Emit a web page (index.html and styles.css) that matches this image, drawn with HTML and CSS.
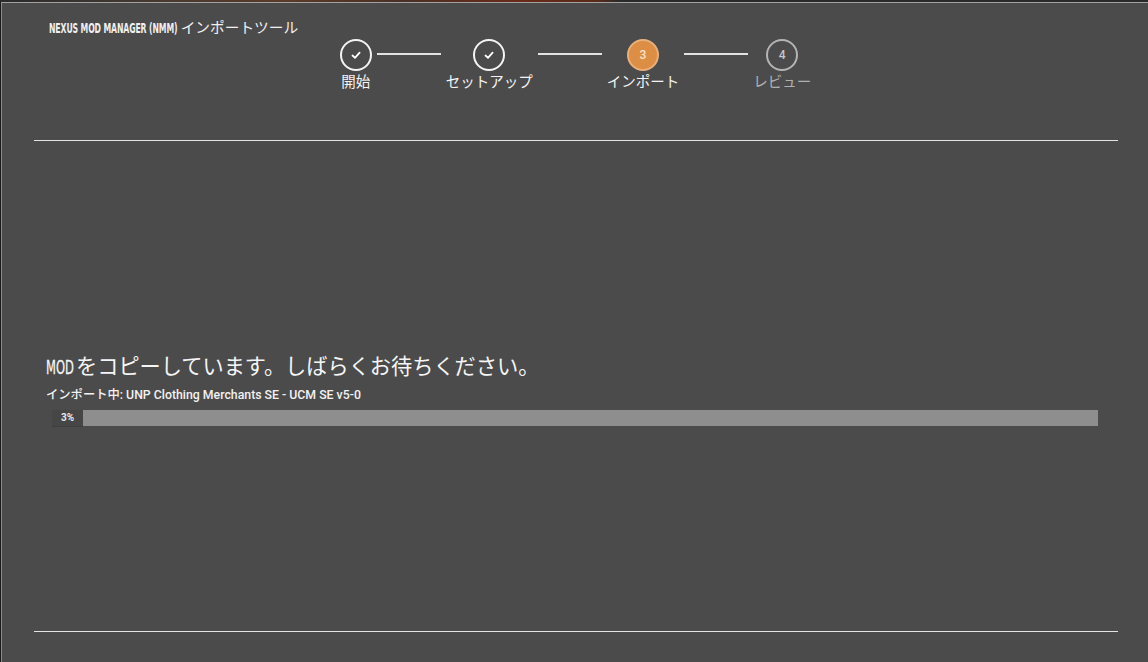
FILE: index.html
```html
<!DOCTYPE html>
<html lang="ja">
<head>
<meta charset="utf-8">
<title>NMM インポートツール</title>
<link rel="stylesheet" href="styles.css">
</head>
<body>
<div class="topstrip"></div>
<div class="panel">
  <header class="header">
    <div class="title"><span class="cond-box title-cond"><span class="cond">NEXUS MOD MANAGER (NMM)</span></span> インポートツール</div>
    <nav class="stepper">
      <div class="step done">
        <div class="circle"><svg viewBox="0 0 12 12" width="12" height="12"><path d="M2.5 6.5 L5 8.8 L9.6 3.6" fill="none" stroke="#fff" stroke-width="1.8" stroke-linecap="round" stroke-linejoin="round"/></svg></div>
        <div class="label">開始</div>
      </div>
      <div class="line"></div>
      <div class="step done">
        <div class="circle"><svg viewBox="0 0 12 12" width="12" height="12"><path d="M2.5 6.5 L5 8.8 L9.6 3.6" fill="none" stroke="#fff" stroke-width="1.8" stroke-linecap="round" stroke-linejoin="round"/></svg></div>
        <div class="label">セットアップ</div>
      </div>
      <div class="line"></div>
      <div class="step active">
        <div class="circle">3</div>
        <div class="label">インポート</div>
      </div>
      <div class="line"></div>
      <div class="step todo">
        <div class="circle">4</div>
        <div class="label">レビュー</div>
      </div>
    </nav>
  </header>
  <hr class="rule">
  <main class="content">
    <h1 class="heading"><span class="cond-box heading-cond"><span class="cond">MOD</span></span>をコピーしています。しばらくお待ちください。</h1>
    <p class="status">インポート中: UNP Clothing Merchants SE - UCM SE v5-0</p>
    <div class="progress">
      <div class="fill" style="width:3%">3%</div>
    </div>
  </main>
  <hr class="rule">
</div>
</body>
</html>
```
FILE: styles.css
```css
html, body {
  margin: 0;
  padding: 0;
  background: #1b1b1b;
  height: 100%;
  overflow: hidden;
}
body {
  font-family: Roboto, "Noto Sans CJK JP", "Noto Sans", sans-serif;
  color: #f2f2f2;
}
.topstrip {
  height: 2px;
  background: linear-gradient(90deg, #2a2a2a 0%, #3a3530 8%, #4a3a30 15%, #5a3a28 25%, #4a3025 35%, #6a2a18 45%, #5a2a18 52%, #2a2a2a 54%, #2a2a2a 100%);
}
.panel {
  margin-left: 1px;
  border-left: 1px solid #8a8a8a;
  border-top: 1px solid #a2a2a2;
  background: #4b4b4b;
  height: 660px;
  box-sizing: border-box;
}
.header {
  padding: 15px 0 0 47px;
  height: 137px;
  box-sizing: border-box;
}
.title {
  font-size: 14.7px;
  line-height: 20px;
  color: #f0f0f0;
  height: 20px;
  white-space: nowrap;
}
.cond-box {
  display: inline-block;
  white-space: nowrap;
  vertical-align: baseline;
}
.cond {
  display: inline-block;
  font-family: "DejaVu Sans Condensed", "DejaVu Sans", sans-serif;
  transform-origin: left center;
}
.title-cond {
  width: 128px;
}
.title-cond .cond {
  font-size: 14px;
  font-weight: bold;
  transform: scaleX(0.615);
  letter-spacing: -0.2px;
}
.stepper {
  display: flex;
  justify-content: center;
  align-items: flex-start;
  gap: 5px;
  margin-left: -46px;
  margin-top: 1px;
}
.step {
  display: flex;
  flex-direction: column;
  align-items: center;
}
.circle {
  width: 32px;
  height: 32px;
  box-sizing: border-box;
  border-radius: 50%;
  border: 2px solid #f4f4f4;
  display: flex;
  align-items: center;
  justify-content: center;
  font-size: 12px;
  font-weight: 500;
}
.step.active .circle {
  background: #dc8e44;
  border-color: #e9b07a;
  color: #fbe3cb;
}
.step.todo .circle {
  border-color: #b4b4b4;
  color: #c6c6c6;
}
.label {
  font-size: 14.5px;
  line-height: 18px;
  margin-top: 3px;
  white-space: nowrap;
  color: #f4f4f4;
}
.step.todo .label {
  color: #b0b0b0;
}
.line {
  width: 64px;
  height: 2px;
  background: #e2e2e2;
  margin-top: 14px;
}
.rule {
  margin: 0 30px 0 32px;
  border: 0;
  height: 1px;
  background: #e4e4e4;
}
.content {
  height: 490px;
  box-sizing: border-box;
  padding: 213px 50px 0 44px;
}
.heading {
  margin: 0;
  font-size: 21.2px;
  font-weight: 400;
  line-height: 26px;
  color: #f5f5f5;
  white-space: nowrap;
}
.heading-cond {
  width: 30px;
}
.heading-cond .cond {
  font-size: 20px;
  transform: scaleX(0.64);
  -webkit-text-stroke: 0.3px #f5f5f5;
}
.status {
  margin: 7px 0 0;
  font-size: 12.3px;
  line-height: 16px;
  font-weight: 500;
  color: #f2f2f2;
}
.progress {
  margin: 7px 0 0 6px;
  height: 16px;
  background: #8e8e8e;
  display: flex;
}
.fill {
  background: #464646;
  box-shadow: 0 1px 0 #3e3e3e;
  font-size: 10px;
  font-weight: 700;
  line-height: 16px;
  color: #e8e8e8;
  text-align: center;
}
```
